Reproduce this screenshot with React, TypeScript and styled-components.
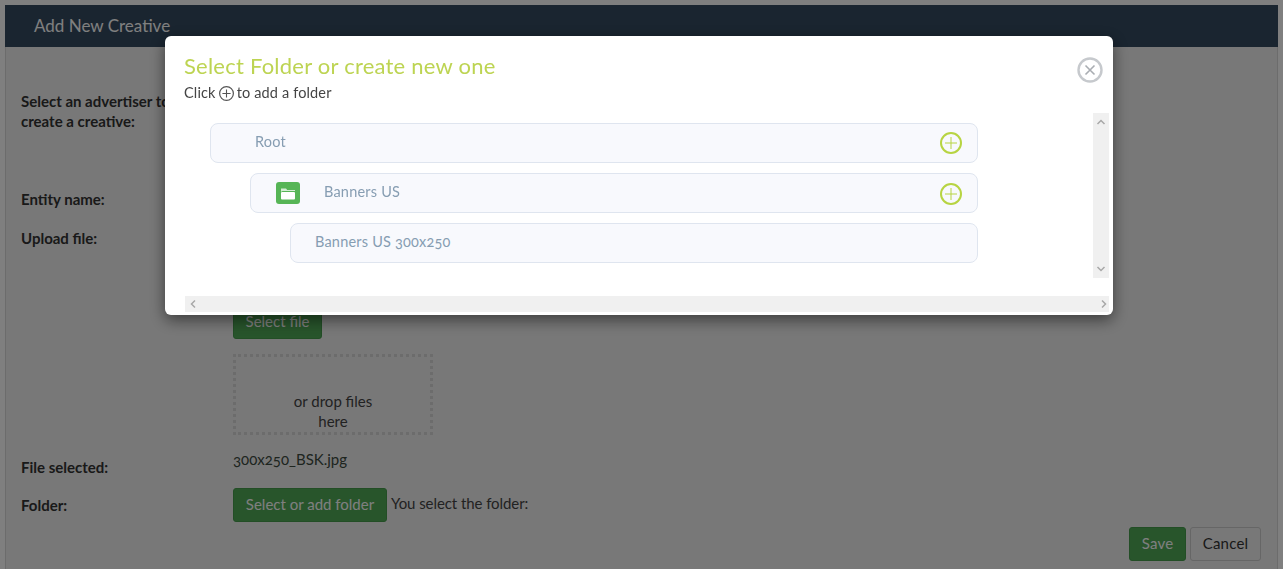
import React from "react";
import styled, { createGlobalStyle } from "styled-components";

const Global = createGlobalStyle`
  html, body { margin: 0; padding: 0; height: 100%; overflow: hidden; background: #fff; }
  body { font-family: Lato, "Open Sans", "Liberation Sans", sans-serif; font-size: 15px; color: #333; font-variant-numeric: oldstyle-nums; }
  * { box-sizing: border-box; }
`;
const Page = styled.div`height: 569px; padding: 5px 5px 0; display: flex; flex-direction: column;`;
const Header = styled.header`height: 42px; flex: none; background: #344a60; color: #fff; font-size: 17px; line-height: 41px; padding-left: 29px;`;
const Panel = styled.main`flex: 1; background: #f0f0f0; border-left: 1px solid #d8d8d8; border-right: 1px solid #d8d8d8; padding: 44px 15px 0; display: flex; flex-direction: column;`;
const Row = styled.div<{ $h: number; $mt?: number }>`display: grid; grid-template-columns: 212px 1fr; height: ${p => p.$h}px; margin-top: ${p => p.$mt ?? 0}px;`;
const Label = styled.label<{ $top?: number }>`font-weight: 700; line-height: 20px; padding-top: ${p => p.$top ?? 0}px; color: #333;`;
const Field = styled.div<{ $inline?: boolean }>`display: flex; flex-direction: ${p => (p.$inline ? "row" : "column")}; align-items: flex-start;`;
const GreenBtn = styled.button`height: 34px; border: 1px solid #469c4d; border-radius: 3px; background: #50aa57; color: #fff; padding: 0 0 2px; font: inherit;`;
const UploadBtn = styled(GreenBtn)`margin-top: 77px; width: 89px;`;
const FolderBtn = styled(GreenBtn)`width: 154px;`;
const Drop = styled.div`width: 200px; height: 81px; margin-top: 15px; border: 3px dotted #d8d8d8; text-align: center; line-height: 20px; padding: 34px 55px 0; color: #444;`;
const FileName = styled.div`line-height: 20px; color: #3c4a3f;`;
const Note = styled.span`margin-left: 4px; line-height: 30px; color: #444; letter-spacing: -.07px;`;
const Footer = styled.div`display: flex; justify-content: flex-end; gap: 4px; margin-top: 5px; padding-right: 1px;`;
const Save = styled(GreenBtn)`width: 57px; letter-spacing: .2px;`;
const Cancel = styled.button`width: 71px; height: 34px; border: 1px solid #ccc; border-radius: 3px; background: #f0f0f0; color: #333; font: inherit; letter-spacing: .2px; padding: 0 0 2px;`;

const Overlay = styled.div`position: fixed; inset: 0; background: rgba(0,0,0,.5);`;
const Modal = styled.section`position: fixed; left: 165px; top: 36px; width: 948px; height: 279px; background: #fff; border-radius: 6px; box-shadow: 0 5px 15px rgba(0,0,0,.5); padding: 0 4px 3px 19px; display: flex; flex-direction: column;`;
const Title = styled.h2`margin: 16px 0 0; height: 28px; font-weight: 400; font-size: 22px; line-height: 27px; color: #bdd452; letter-spacing: .23px;`;
const Hint = styled.p`margin: 3px 0 0; height: 20px; line-height: 20px; font-size: 14.5px; color: #444; letter-spacing: .15px; display: flex; align-items: center; gap: 3px;`;
const Close = styled.button`position: absolute; right: 10px; top: 21px; width: 26px; height: 26px; padding: 0; border: 0; background: none; display: block;`;
const Body = styled.div`margin-top: 10px; height: 165px; display: flex;`;
const Tree = styled.div`flex: 1; padding: 10px 0 0 26px; display: flex; flex-direction: column; gap: 10px;`;
const Node = styled.div<{ $level: number; $text: number }>`margin-left: ${p => p.$level * 40}px; width: ${p => 768 - p.$level * 40}px; height: 40px; flex: none; border: 1px solid #dfe5ef; border-radius: 8px; background: #f8f9fd; display: flex; align-items: center; padding: 0 15px 0 ${p => p.$text}px; color: #869db2; font-size: 14.5px; letter-spacing: .2px;`;
const NodeName = styled.span`flex: 1; padding-bottom: 4px;`;
const FolderIcon = styled.span`width: 24px; height: 22px; border-radius: 3px; background: #56b556; display: flex; align-items: center; justify-content: center; margin-right: 24px; margin-left: -1px;`;
const AddSlot = styled.span<{ $low?: boolean }>`display: flex; margin-top: ${p => (p.$low ? 2 : 0)}px;`;
const VTrack = styled.div`width: 16px; background: #f0f0f0; display: flex; flex-direction: column; justify-content: space-between; align-items: center; padding: 4px 0;`;
const HTrack = styled.div`margin: 18px 0 0 1px; height: 16px; background: #f0f0f0; display: flex; justify-content: space-between; align-items: center; padding: 0 0 0 3px;`;

const Plus = ({ size = 22, color = "#b7d442", sw = 2, psw = 1 }: { size?: number; color?: string; sw?: number; psw?: number }) => (
  <svg width={size} height={size} viewBox="0 0 22 22" fill="none">
    <circle cx="11" cy="11" r={11 - sw / 2} stroke={color} strokeWidth={sw} />
    <path d="M11 5v12M5 11h12" stroke={color} strokeWidth={psw} />
  </svg>
);
const Chevron = ({ d }: { d: string }) => (
  <svg width="10" height="10" viewBox="0 0 10 10" fill="none"><path d={d} stroke="#a8a8a8" strokeWidth="1.5" /></svg>
);

export default function App() {
  return (
    <>
      <Global />
      <Page>
        <Header>Add New Creative</Header>
        <Panel>
          <Row $h={40}><Label>Select an advertiser to<br />create a creative:</Label><Field /></Row>
          <Row $h={20} $mt={58}><Label>Entity name:</Label><Field /></Row>
          <Row $h={221} $mt={19}>
            <Label>Upload file:</Label>
            <Field>
              <UploadBtn>Select file</UploadBtn>
              <Drop>or drop files here</Drop>
            </Field>
          </Row>
          <Row $h={28}>
            <Label $top={8}>File selected:</Label>
            <FileName>300x250_BSK.jpg</FileName>
          </Row>
          <Row $h={34} $mt={11}>
            <Label $top={7}>Folder:</Label>
            <Field $inline>
              <FolderBtn>Select or add folder</FolderBtn>
              <Note>You select the folder:</Note>
            </Field>
          </Row>
          <Footer><Save>Save</Save><Cancel>Cancel</Cancel></Footer>
        </Panel>
      </Page>
      <Overlay />
      <Modal>
        <Title>Select Folder or create new one</Title>
        <Hint>Click <Plus size={15} color="#555" sw={1.8} psw={1.6} /> to add a folder</Hint>
        <Close aria-label="Close">
          <svg width="26" height="26" viewBox="0 0 26 26" fill="none">
            <circle cx="13" cy="13" r="11.5" stroke="#c6c9cd" strokeWidth="2.4" />
            <path d="M8.5 8.5l9 9M17.5 8.5l-9 9" stroke="#a9adb2" strokeWidth="1.6" />
          </svg>
        </Close>
        <Body>
          <Tree>
            <Node $level={0} $text={44}><NodeName>Root</NodeName><AddSlot><Plus /></AddSlot></Node>
            <Node $level={1} $text={26}>
              <FolderIcon>
                <svg width="16" height="13" viewBox="0 0 16 13" fill="#fff">
                  <path d="M1 1.5h5l1.2 1.5H15v1H2.5A1.5 1.5 0 0 0 1 5.5z" opacity=".75" />
                  <rect x="1" y="5" width="14" height="7.5" rx="1" />
                </svg>
              </FolderIcon>
              <NodeName>Banners US</NodeName><AddSlot $low><Plus /></AddSlot>
            </Node>
            <Node $level={2} $text={24}><NodeName>Banners US 300x250</NodeName></Node>
          </Tree>
          <VTrack><Chevron d="M1.5 7L5 3.5 8.5 7" /><Chevron d="M1.5 3L5 6.5 8.5 3" /></VTrack>
        </Body>
        <HTrack><Chevron d="M7 1.5L3.5 5 7 8.5" /><Chevron d="M3 1.5L6.5 5 3 8.5" /></HTrack>
      </Modal>
    </>
  );
}
